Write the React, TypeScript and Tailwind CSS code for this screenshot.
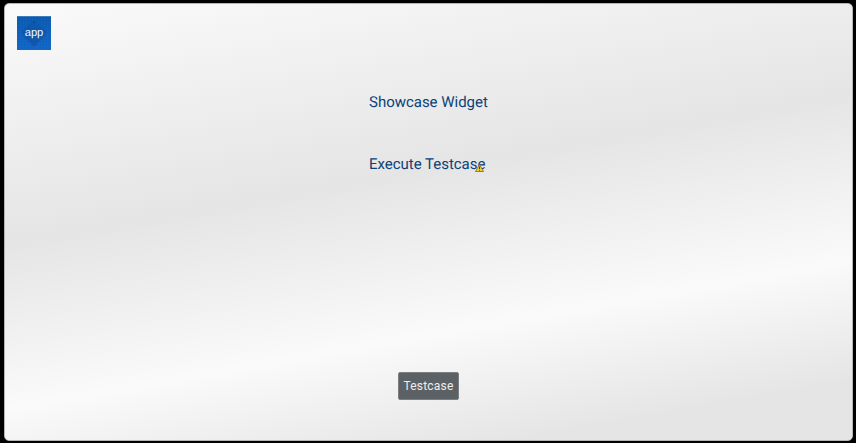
function AppLogo() {
  return (
    <svg width="34" height="34" viewBox="0 0 34 34" className="block">
      <defs>
        <pattern id="grid" width="3" height="3" patternUnits="userSpaceOnUse">
          <path d="M0 .5H3M.5 0V3" stroke="#2a78cf" strokeWidth=".5" opacity=".25" />
        </pattern>
        <linearGradient id="shade" x1="0" y1="0" x2="0" y2="1">
          <stop offset="0" stopColor="#0a59b0" />
          <stop offset="1" stopColor="#0f66c6" />
        </linearGradient>
      </defs>
      <rect width="34" height="34" fill="url(#shade)" />
      <rect width="34" height="34" fill="url(#grid)" />
      <path d="M5 19L17 31L29 19L27 17H7Z" fill="#29499a" opacity=".65" />
      <path d="M17 4L30 16L17 29L4 16Z" fill="#0b58ad" />
      <circle cx="17" cy="6" r=".7" fill="#073b7d" />
      <path d="M0 .5H34" stroke="#5289bd" opacity=".7" />
      <text x="17" y="20" textAnchor="middle" fill="#f2f8ff" fontSize="11.2" textRendering="geometricPrecision" fontFamily="Liberation Sans, Arial, sans-serif">app</text>
    </svg>
  );
}

function WarningBadge() {
  return (
    <svg width="9" height="8" viewBox="0 0 9 8" className="absolute right-[1px] bottom-[4px]">
      <path d="M4.5 .5L8.5 7.5H.5Z" fill="#f5cf2b" stroke="#857137" strokeWidth=".9" strokeLinejoin="round" />
      <path d="M4.5 2.5V5M4.5 5.7V6.6" stroke="#4a3c0c" strokeWidth="1" />
    </svg>
  );
}

export default function App() {
  return (
    <div className="h-[443px] w-[856px] overflow-hidden bg-black pt-[3px] pl-[4px] font-['Roboto',sans-serif] [text-rendering:geometricPrecision]">
      <main className="flex h-[438px] w-[849px] flex-col items-center rounded-[5px] border border-[#b5b5b5] bg-[linear-gradient(170deg,#fafafa_0%,#e5e5e5_41%,#fafafa_69.3%,#e5e5e5_90%)] px-3 pt-3">
        <header className="h-[34px] w-full">
          <AppLogo />
        </header>
        <nav className="mt-[40px] flex w-[119px] flex-col items-start gap-[38px] text-[15px] leading-6 tracking-[-0.02px] text-[#0c4279]">
          <a className="whitespace-nowrap">Showcase Widget</a>
          <a className="relative whitespace-nowrap">
            Execute Testcase
            <WarningBadge />
          </a>
        </nav>
        <button className="mt-auto mb-[40px] h-[28px] w-[61px] rounded-[2px] border border-[#7c8082] bg-[#5c6165] text-center text-[12px] tracking-[0.2px] text-[#eeeeee]">
          Testcase
        </button>
      </main>
    </div>
  );
}
